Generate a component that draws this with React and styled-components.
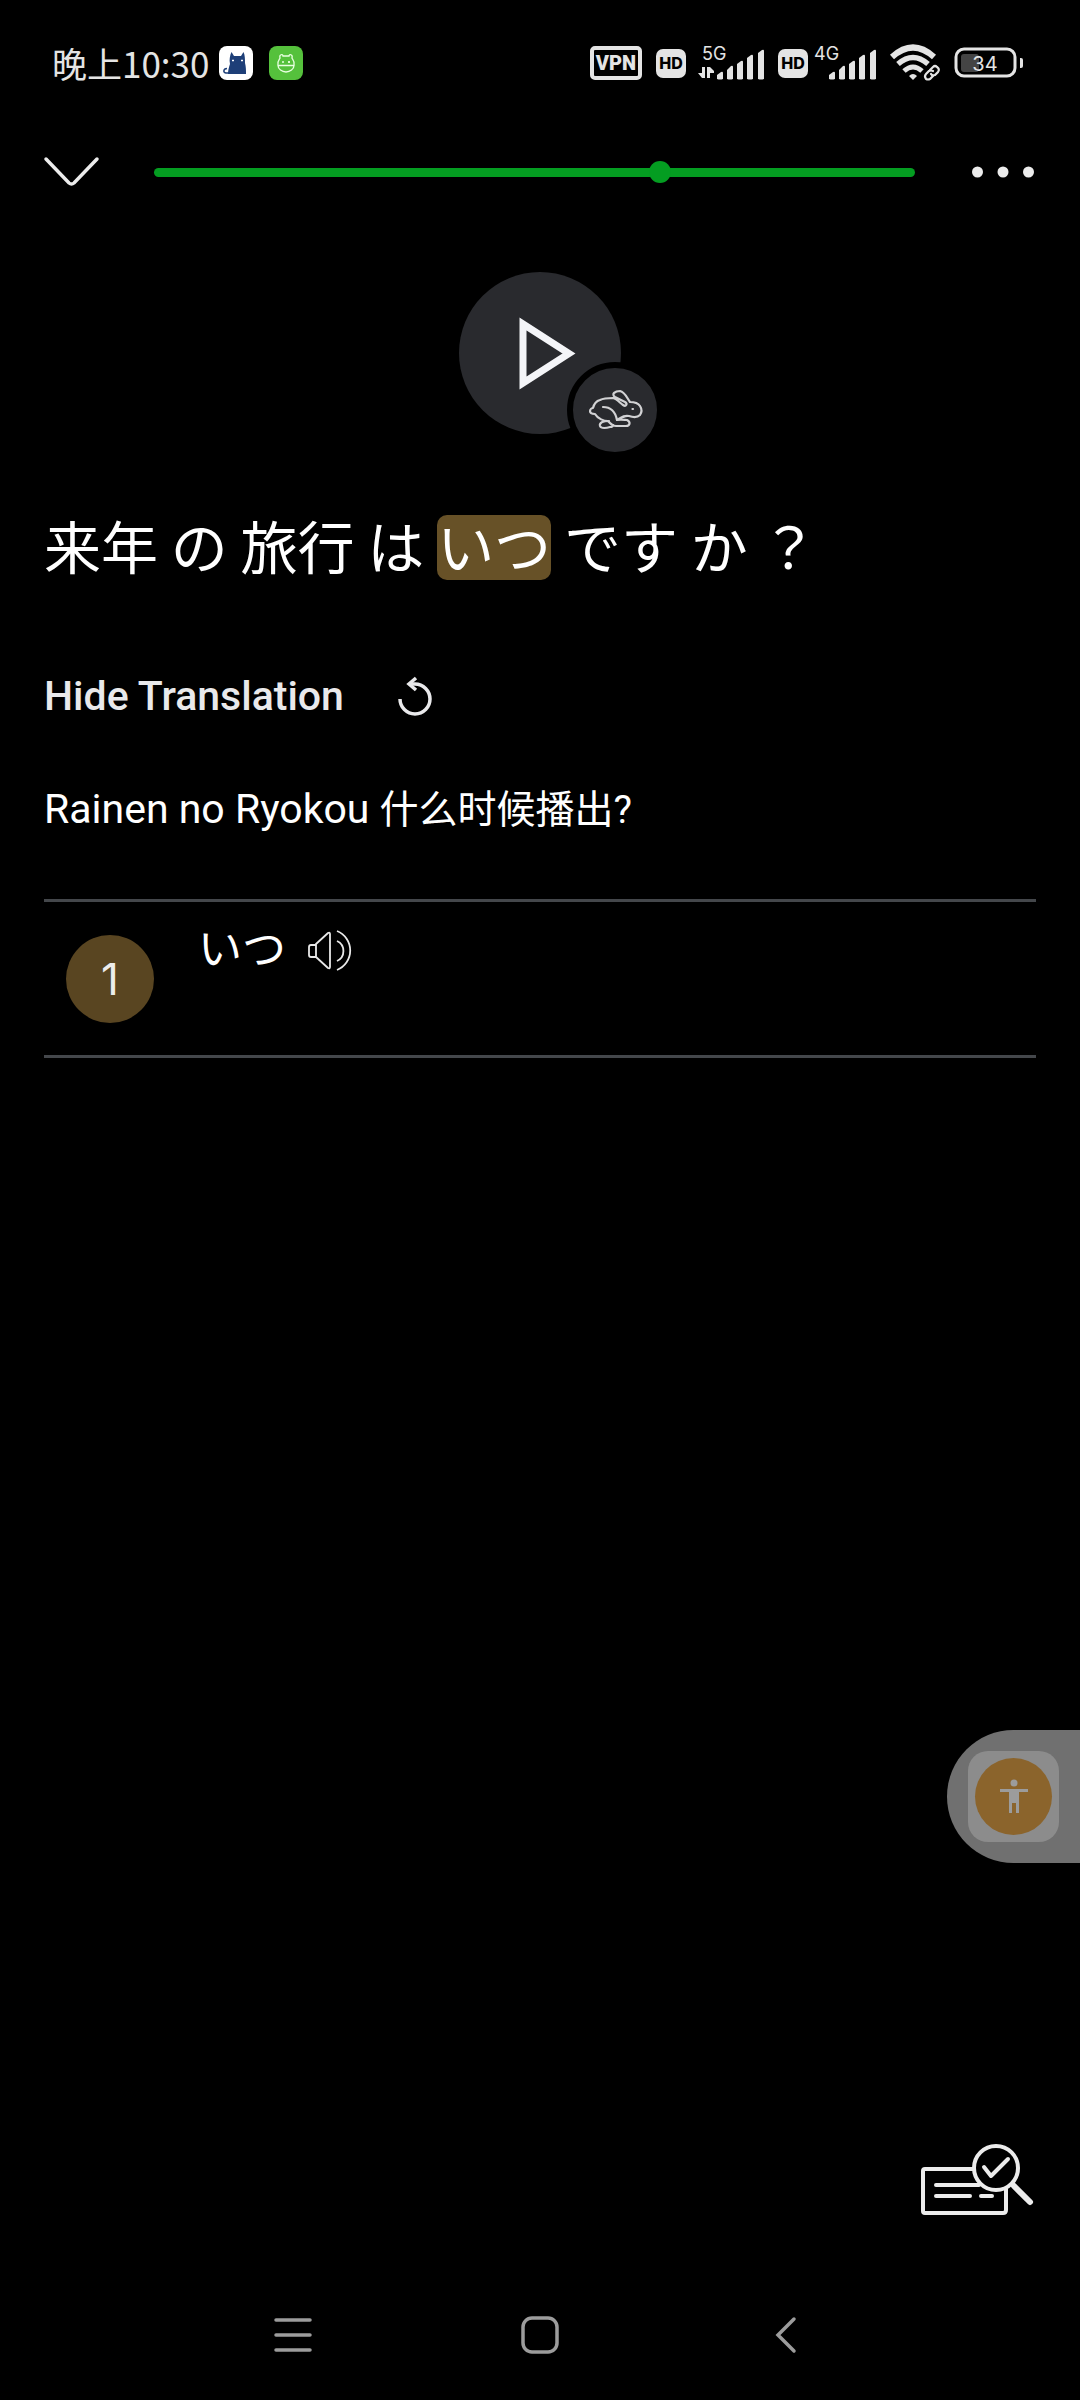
import React, { useState } from 'react';
import styled, { createGlobalStyle } from 'styled-components';

const SENTENCE = ['来年', 'の', '旅行', 'は', 'いつ', 'です', 'か', '？'];
const ACTIVE_WORD = 'いつ';

const GlobalStyle = createGlobalStyle`
  * {
    box-sizing: border-box;
  }

  body {
    margin: 0;
    background: #000;
    color: #fff;
    font-family: Roboto, "Noto Sans CJK SC", sans-serif;
  }

  button {
    padding: 0;
    border: 0;
    background: none;
    color: inherit;
    font: inherit;
    cursor: pointer;
  }

  svg {
    display: block;
    flex: none;
    overflow: visible;
  }
`;

const Screen = styled.div`
  display: flex;
  flex-direction: column;
  min-height: 100vh;
`;

const StatusBar = styled.div`
  display: flex;
  align-items: center;
  justify-content: space-between;
  height: 126px;
  padding: 0 56px 0 52px;
  color: #e4e4e4;
`;

const StatusGroup = styled.div`
  display: flex;
  align-items: center;
  gap: ${props => props.$gap}px;
`;

const Clock = styled.span`
  margin-right: -6px;
  font-family: "Noto Sans CJK SC", sans-serif;
  font-size: 35px;
  line-height: 40px;
`;

const VpnBadge = styled.span`
  width: 52px;
  border: 4px solid #e4e4e4;
  border-radius: 5px;
  font-size: 20px;
  font-weight: 900;
  line-height: 26px;
  text-align: center;
`;

const HdBadge = styled.span`
  width: 30px;
  border-radius: 7px;
  background: #e4e4e4;
  color: #000;
  font-family: Inter, sans-serif;
  font-size: 16px;
  font-weight: 800;
  line-height: 29px;
  text-align: center;
`;

const Header = styled.header`
  display: flex;
  align-items: center;
  height: 92px;
  padding: 0 46px 0 44px;
`;

const IconButton = styled.button`
  display: flex;
  align-items: center;
  justify-content: center;
`;

const Slider = styled.input`
  flex: 1;
  min-width: 0;
  height: 22px;
  margin: 0 57px 0 55px;
  appearance: none;
  background: none;

  &::-webkit-slider-runnable-track {
    height: 9px;
    border-radius: 5px;
    background: #049d21;
  }

  &::-webkit-slider-thumb {
    appearance: none;
    width: 22px;
    height: 22px;
    margin-top: -7px;
    border-radius: 50%;
    background: #049d21;
  }
`;

const Player = styled.div`
  position: relative;
  align-self: center;
  width: 162px;
  height: 162px;
  margin-top: 54px;
`;

const PlayButton = styled(IconButton)`
  width: 100%;
  height: 100%;
  border-radius: 50%;
  background: #292a2e;
`;

const SpeedButton = styled(IconButton)`
  position: absolute;
  right: -42px;
  bottom: -24px;
  width: 96px;
  height: 96px;
  border: 6px solid #000;
  border-radius: 50%;
  background: #292a2e;
`;

const Content = styled.main`
  display: flex;
  flex: 1;
  flex-direction: column;
  padding: 81px 44px 0;
`;

const Sentence = styled.p`
  margin: 0;
  font-family: "Noto Sans CJK JP", sans-serif;
  font-size: 57px;
  line-height: 59px;
`;

const Word = styled.span`
  display: inline-block;
  padding-bottom: 6px;
  border-radius: 10px;
  background: ${props => (props.$active ? '#675127' : 'none')};
`;

const TranslationBar = styled.div`
  display: flex;
  align-items: center;
  gap: 54px;
  margin-top: 92px;
  color: #e9e9eb;
`;

const TranslationToggle = styled.button`
  font-size: 41px;
  font-weight: 500;
  line-height: 48px;
`;

const Translation = styled.p`
  min-height: 48px;
  margin: 65px 0 0;
  font-size: 41px;
  line-height: 48px;

  span {
    font-size: 39px;
  }
`;

const WordList = styled.ol`
  margin: 65px 0 0;
  padding: 0;
  border-top: 3px solid #44474b;
  list-style: none;
`;

const WordItem = styled.li`
  display: flex;
  height: 156px;
  padding: 0 22px;
  border-bottom: 3px solid #44474b;
`;

const WordNumber = styled.span`
  width: 88px;
  height: 88px;
  margin: 33px 44px 0 0;
  border-radius: 50%;
  background: #594521;
  color: #ececec;
  font-family: Inter, sans-serif;
  font-size: 44px;
  line-height: 88px;
  text-align: center;
`;

const WordButton = styled.button`
  display: flex;
  align-items: center;
  gap: 22px;
  height: 66px;
  margin-top: 16px;
  font-family: "Noto Sans CJK JP", sans-serif;
  font-size: 44px;
  line-height: 56px;

  span {
    padding-bottom: 10px;
  }
`;

const QuizButton = styled(IconButton)`
  align-self: flex-end;
  margin: auto 0 53px;
`;

const AccessibilityTab = styled.button`
  position: fixed;
  top: 1730px;
  right: 0;
  padding: 21px;
  border-radius: 67px 0 0 67px;
  background: #707070;
`;

const AccessibilityTile = styled.span`
  display: block;
  padding: 7px;
  border-radius: 20px;
  background: #8c8c8c;
`;

const NavBar = styled.nav`
  display: flex;
  align-items: center;
  justify-content: center;
  gap: 208px;
  height: 130px;
`;

const CatIcon = () => (
  <svg width="34" height="34" viewBox="0 0 34 34">
    <rect width="34" height="34" rx="8" fill="#fff" />
    <path
      d="M9 28 C9 24 10 21 11 18 C10 14 11 9 12.5 6 L15 10 H22 L24.500 6 C26 9 26 13 26 17 C27 21 27 24 27 28Z"
      fill="#1e3f78"
    />
    <path d="M11 27 H7 C4 27 4 22.500 8 22.500" fill="none" stroke="#1e3f78" strokeWidth="1.500" />
    <path d="M13 14.500h2M22 14.500h2" stroke="#fff" strokeWidth="1.400" />
  </svg>
);

const MonsterIcon = () => (
  <svg width="34" height="34" viewBox="0 0 34 34">
    <rect width="34" height="34" rx="8" fill="#55c13c" />
    <g fill="none" stroke="#e8ffe0" strokeWidth="1.300">
      <path d="M9 19 C8 15 11 13 11 12 C10 8 14 8 14 10 H20 C20 8 24 8 23 12 C23 13 26 15 25 19" />
      <path d="M9 19.500 H25 C25 23 21 26 17 26 S9 23 9 19.500Z" />
      <path d="M13 16h2M19 16h2M20 15v2" />
    </g>
  </svg>
);

const Signal = ({ label, width, active }) => (
  <svg width={width} height="36" viewBox={`${62 - width} 0 ${width} 36`} fill="#e4e4e4">
    <text x="0" y="15" fontFamily="Inter, sans-serif" fontSize="18" fontWeight="400">{label}</text>
    {active && (
      <path d="M-4 28 L0 33 H3 V22 H0 V28Z M5 33 V22 H8 L12 26 V28 H8 V33Z" />
    )}
    <path d="M15 34V30L19 27Q21 26 21 28V34Q18 35 15 34Z" />
    <path d="M25 34V25L29 21Q31 20 31 22V34Q28 35 25 34Z" />
    <path d="M35 34V19L39 16Q41 15 41 17V34Q38 35 35 34Z" />
    <path d="M45 34V13L49 10Q51 9 51 11V34Q48 35 45 34Z" />
    <path d="M56 34V8L60 5Q62 4 62 6V34Q59 35 56 34Z" />
  </svg>
);

const WifiIcon = () => (
  <svg width="50" height="36" viewBox="0 0 50 36" fill="none" stroke="#e4e4e4">
    <path d="M2 12 Q23 -7 44 12" strokeWidth="6" />
    <path d="M8 19 Q23 6 38 19" strokeWidth="5.500" />
    <path d="M14 26 Q23 18 32 26" strokeWidth="5" />
    <path d="M19 31 Q23 27 27 31 L23 35Z" fill="#e4e4e4" stroke="none" />
    <g strokeWidth="2.200" strokeLinecap="round">
      <path d="M40 25 L43 22 Q45 20 47 22 Q50 24 48 27 L45 30 Q42 31 41 29" />
      <path d="M43 26 Q41 25 39 26 L36 29 Q34 31 36 34 Q38 35 40 34 L43 31" />
    </g>
  </svg>
);

const BatteryIcon = () => (
  <svg width="70" height="32" viewBox="0 0 70 32">
    <rect x="7" y="7" width="18" height="18" rx="3" fill="#444" />
    <rect x="2" y="2" width="59" height="27" rx="8" fill="none" stroke="#e4e4e4" strokeWidth="3" />
    <path d="M66 11h1q2 0 2 2v6q0 2-2 2h-1z" fill="#e4e4e4" />
    <text
      x="31"
      y="24"
      fontFamily="Inter, sans-serif"
      fontSize="20"
      fontWeight="400"
      fill="#e4e4e4"
      textAnchor="middle"
    >
      34
    </text>
  </svg>
);

const ChevronIcon = () => (
  <svg width="55" height="30" viewBox="0 0 55 30" fill="none" stroke="#ececec" strokeWidth="3.500">
    <path d="M2 2 L25 26 Q27.500 28 30 26 L53 2" strokeLinecap="round" />
  </svg>
);

const MoreIcon = () => (
  <svg width="62" height="12" viewBox="0 0 62 12" fill="#ececec">
    <circle cx="5.500" cy="6" r="5.500" />
    <circle cx="31" cy="6" r="5.500" />
    <circle cx="56.500" cy="6" r="5.500" />
  </svg>
);

const PlayIcon = () => (
  <svg width="162" height="162" viewBox="0 0 162 162">
    <path d="M64 52 V111 L110 81.500Z" fill="none" stroke="#f4f5f8" strokeWidth="7" />
  </svg>
);

const RabbitIcon = () => (
  <svg
    width="52"
    height="40"
    viewBox="0 0 52 40"
    fill="none"
    stroke="#d2d2d4"
    strokeWidth="2.200"
    strokeLinecap="round"
    strokeLinejoin="round"
  >
    <path d="M24 8 C28 9 31 13 34 15 C37 17 39 14 36 12 L26 7 C22 4 26 1 31 1 C36 2 38 8 41 12 C46 12 49 13 51 16 C53 19 53 22 51 25 C48 28 43 27 40 26 C36 25 33 27 28 30 C32 29 36 30 38 30 C42 32 41 36 37 36 H27 C23 36 21 33 19 31 C15 31 9 29 6 24 C3 24 1 23 1 21 C1 19 3 18 4 18 C5 14 7 11 11 10 C15 8 20 8 24 8Z" />
    <path d="M14 17 C21 17 26 20 28 30" />
    <path d="M20 31 C15 31 10 32 11 36 C12 39 18 38 21 37 C23 37 24 36 24 35" />
    <path d="M43.500 19h.5" />
  </svg>
);

const ReplayIcon = () => (
  <svg width="34" height="40" viewBox="0 0 34 40" fill="none" stroke="#e9e9eb" strokeWidth="3.500">
    <path d="M2 23 A15 15 0 1 0 17 8 H12" />
    <path d="M18 2 L11 8 L18 14" />
  </svg>
);

const SpeakerIcon = () => (
  <svg width="46" height="44" viewBox="0 0 46 44" fill="none" stroke="#e9e9e9" strokeWidth="1.800">
    <path d="M8 16 H3 Q1 16 1 18 V26 Q1 28 3 28 H8" />
    <path d="M8 15 L20 4 Q22 3 22 5 V38 Q22 40 20 39 L8 28Z" strokeLinejoin="round" />
    <path d="M29 12 A11 11 0 0 1 29 32" />
    <path d="M29 2 A21 21 0 0 1 29 41" />
  </svg>
);

const PersonIcon = () => (
  <svg width="77" height="77" viewBox="0 0 77 77">
    <circle cx="38.500" cy="38.500" r="38.500" fill="#8b642c" />
    <g fill="#9c9c9c">
      <circle cx="39" cy="25" r="3.500" />
      <path d="M25 31H53V34H44V55H41V45H37V55H34V34H25Z" />
    </g>
  </svg>
);

const QuizIcon = () => (
  <svg
    width="116"
    height="74"
    viewBox="0 0 116 74"
    fill="none"
    stroke="#ececec"
    strokeWidth="4"
    strokeLinecap="round"
    strokeLinejoin="round"
  >
    <path d="M53 26 H5 Q3 26 3 28 V68 Q3 70 5 70 H83 Q86 70 86 67 V46" />
    <path d="M16 42H59M16 53H50M61 53H72" />
    <circle cx="76" cy="25" r="22" />
    <path d="M64 24 L71 33 L88 16" />
    <path d="M94 43 L110 59" strokeWidth="6" />
  </svg>
);

const MenuIcon = () => (
  <svg width="38" height="38" viewBox="0 0 38 38" stroke="#9c9c9c" strokeWidth="3.500" strokeLinecap="round">
    <path d="M1 4H35M1 19H35M1 34H35" />
  </svg>
);

const HomeIcon = () => (
  <svg width="38" height="38" viewBox="0 0 38 38" fill="none" stroke="#9c9c9c" strokeWidth="3.500">
    <rect x="2" y="2" width="34" height="34" rx="9" />
  </svg>
);

const BackIcon = () => (
  <svg width="38" height="38" viewBox="0 0 38 38" fill="none" stroke="#9c9c9c" strokeWidth="3.500" strokeLinecap="round">
    <path d="M27 3 L11 19 L27 35" />
  </svg>
);

export default function App() {
  const [progress, setProgress] = useState(67);
  const [showTranslation, setShowTranslation] = useState(true);

  return (
    <Screen>
      <GlobalStyle />
      <StatusBar>
        <StatusGroup $gap={16}>
          <Clock>晚上10:30</Clock>
          <CatIcon />
          <MonsterIcon />
        </StatusGroup>
        <StatusGroup $gap={14}>
          <VpnBadge>VPN</VpnBadge>
          <StatusGroup $gap={12}>
            <HdBadge>HD</HdBadge>
            <Signal label="5G" width={66} active />
          </StatusGroup>
          <StatusGroup $gap={6}>
            <HdBadge>HD</HdBadge>
            <Signal label="4G" width={62} />
          </StatusGroup>
          <WifiIcon />
          <BatteryIcon />
        </StatusGroup>
      </StatusBar>

      <Header>
        <IconButton aria-label="Close"><ChevronIcon /></IconButton>
        <Slider
          type="range"
          aria-label="Progress"
          value={progress}
          onChange={e => setProgress(Number(e.target.value))}
        />
        <IconButton aria-label="More"><MoreIcon /></IconButton>
      </Header>

      <Player>
        <PlayButton aria-label="Play"><PlayIcon /></PlayButton>
        <SpeedButton aria-label="Speed"><RabbitIcon /></SpeedButton>
      </Player>

      <Content>
        <Sentence lang="ja">
          {SENTENCE.map(word => (
            <React.Fragment key={word}>
              <Word $active={word === ACTIVE_WORD}>{word}</Word>
              {' '}
            </React.Fragment>
          ))}
        </Sentence>

        <TranslationBar>
          <TranslationToggle onClick={() => setShowTranslation(!showTranslation)}>
            {showTranslation ? 'Hide Translation' : 'Show Translation'}
          </TranslationToggle>
          <IconButton aria-label="Reload translation"><ReplayIcon /></IconButton>
        </TranslationBar>
        <Translation>
          {showTranslation && (
            <>
              Rainen no Ryokou <span lang="zh">什么时候播出?</span>
            </>
          )}
        </Translation>

        <WordList>
          <WordItem>
            <WordNumber>1</WordNumber>
            <WordButton lang="ja">
              <span>いつ</span>
              <SpeakerIcon />
            </WordButton>
          </WordItem>
        </WordList>

        <QuizButton aria-label="Check words"><QuizIcon /></QuizButton>
      </Content>

      <AccessibilityTab aria-label="Accessibility">
        <AccessibilityTile><PersonIcon /></AccessibilityTile>
      </AccessibilityTab>

      <NavBar>
        <IconButton aria-label="Recent apps"><MenuIcon /></IconButton>
        <IconButton aria-label="Home"><HomeIcon /></IconButton>
        <IconButton aria-label="Back"><BackIcon /></IconButton>
      </NavBar>
    </Screen>
  );
}
